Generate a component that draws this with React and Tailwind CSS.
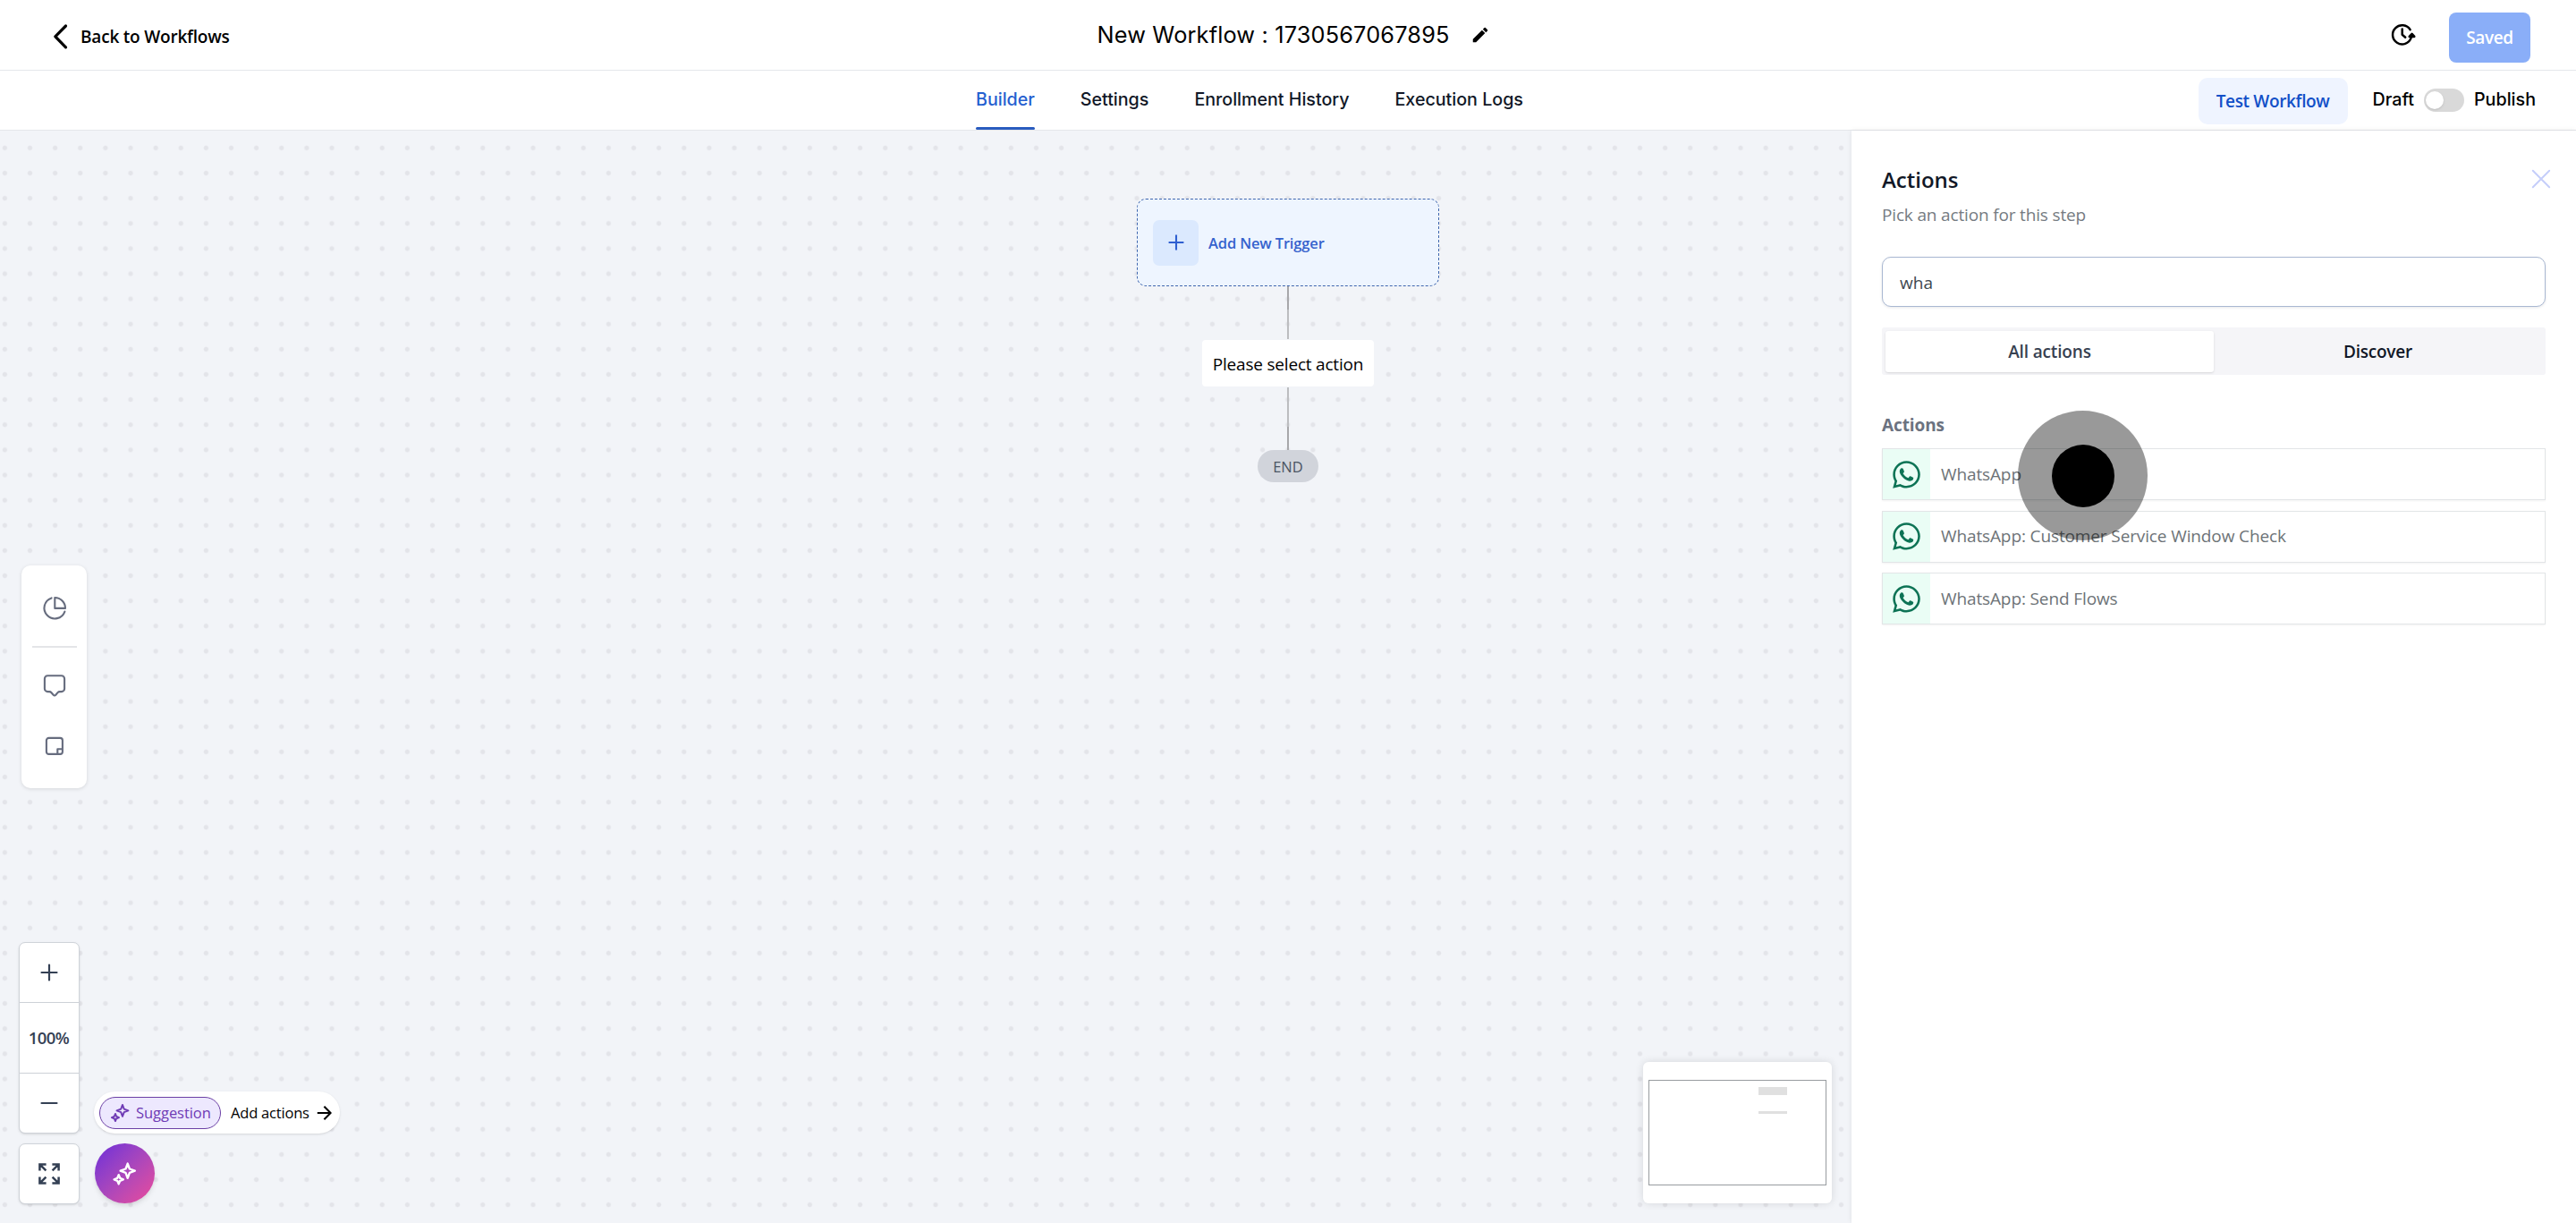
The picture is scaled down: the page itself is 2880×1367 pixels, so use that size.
import { useState } from "react";
import { MdEdit } from "react-icons/md";
import { FaWhatsapp } from "react-icons/fa";

const TABS = ["Builder", "Settings", "Enrollment History", "Execution Logs"];

const ACTIONS = [
  "WhatsApp",
  "WhatsApp: Customer Service Window Check",
  "WhatsApp: Send Flows",
];

function Sparkles({ className }) {
  return (
    <svg viewBox="0 0 30 30" fill="none" stroke="currentColor" strokeLinejoin="round" className={className}>
      <path strokeWidth="2.4" d="M18.7 3.6l2.2 5.9 5.9 2.2-5.9 2.2-2.2 5.9-2.2-5.9-5.9-2.2 5.9-2.2z" />
      <path strokeWidth="2.4" d="M8.7 16.2l1.5 3.6 3.6 1.5-3.6 1.5-1.5 3.6-1.5-3.6-3.6-1.5 3.6-1.5z" />
    </svg>
  );
}

function Header() {
  return (
    <header className="grid grid-cols-[1fr_auto_1fr] h-[79px] border-b border-[#e5e7eb] bg-white">
      <div className="flex items-center pl-[58px] pt-[3px]">
        <svg width="20" height="30" viewBox="0 0 20 30" fill="none" stroke="#000" strokeWidth="3.2" strokeLinecap="round" strokeLinejoin="round">
          <path d="M15.5 3L3.8 14.8l11.7 12" />
        </svg>
        <span className="ml-3 pt-[2px] text-[19px] tracking-[-0.2px] font-semibold text-black">Back to Workflows</span>
      </div>

      <div className="flex items-center pl-[12px] pb-px">
        <h1 className="w-[395px] font-['Inter'] text-[25.3px] font-normal tracking-[0.17px] text-black whitespace-nowrap">
          New Workflow : 1730567067895
        </h1>
        <MdEdit className="ml-[22px] size-[22px] text-black" />
      </div>

      <div className="flex justify-end pr-[51px] pt-[14px]">
        <svg className="mt-[11px] mr-[35px]" width="31" height="28" viewBox="0 0 31 28" fill="none" stroke="#000" strokeWidth="2.5" strokeLinecap="round" strokeLinejoin="round">
          <path d="M22.6 8.2A10.6 10.6 0 1 0 23.6 17.4" />
          <path d="M13.7 7.6v6.2l3.5 2.9" />
          <path d="M24.6 12.8l2.7 3.1h-5.6z" fill="#000" />
        </svg>
        <button className="h-[56px] w-[91px] rounded-[8px] bg-[#8aaef8] pt-px text-[19px] font-semibold tracking-[-0.4px] text-white">
          Saved
        </button>
      </div>
    </header>
  );
}

function TabBar({ active, onChange }) {
  return (
    <nav className="grid grid-cols-[1fr_auto_1fr] h-[67px] border-b border-[#e5e7eb] bg-white font-['Inter'] text-[19.7px] font-medium">
      <div />
      <div className="flex gap-[51px] pr-[86px]">
        {TABS.map((t) => (
          <button
            key={t}
            onClick={() => onChange(t)}
            className={
              t === active
                ? "relative pb-px text-[#2560d0] tracking-[-0.05px]"
                : "relative pb-px text-[#111827] tracking-[-0.02px]"
            }
          >
            {t}
            {t === active && <span className="absolute bottom-0 left-0 h-[3px] w-full rounded-sm bg-[#2a5cbf]" />}
          </button>
        ))}
      </div>
      <div className="flex justify-end pt-2 pr-[45px] text-black">
        <button className="h-[52px] w-[167px] rounded-[10px] bg-[#eff4ff] font-['Open_Sans'] text-[19px] font-semibold tracking-[-0.35px] text-[#1250c8]">
          Test Workflow
        </button>
        <div className="ml-7 flex h-[50px] items-center">
          <span>Draft</span>
          <span className="mx-[11px] flex h-[26px] w-[45px] items-center rounded-full bg-[#d9d9d9] pl-[2.5px]">
            <span className="size-5 rounded-full bg-white shadow" />
          </span>
          <span>Publish</span>
        </div>
      </div>
    </nav>
  );
}

function Flow() {
  return (
    <div className="absolute left-[1271px] top-[76px] flex w-[338px] flex-col items-center">
      <div className="flex h-[98px] w-full items-center rounded-[10px] border border-dashed border-[#3f66ae] bg-[#eef5ff] pl-[17px]">
        <span className="flex size-[51px] items-center justify-center rounded-[7px] bg-[#dbe9fe]">
          <svg width="18" height="18" viewBox="0 0 18 18" stroke="#2f5fd0" strokeWidth="2.1">
            <path d="M9 .6v16.8M.6 9h16.8" />
          </svg>
        </span>
        <span className="ml-[11px] pt-[2px] text-[16.5px] font-semibold tracking-[-0.15px] text-[#3562cd]">Add New Trigger</span>
      </div>
      <div className="h-[26px] w-[2px] bg-[#a7a7aa]" />
      <div className="h-[33px] w-[2px] bg-[#bcbdc0]" />
      <div className="mt-px flex h-[52px] w-[192px] items-center justify-center rounded-[4px] bg-white pt-[2px] text-[19px] tracking-[-0.2px] text-black">
        Please select action
      </div>
      <div className="mt-px h-[44px] w-[2px] bg-[#bcbdc0]" />
      <div className="h-[26px] w-[2px] bg-[#a7a7aa]" />
      <div className="flex h-[36px] w-[68px] items-center justify-center rounded-full bg-[#d1d4db] pt-[2px] text-[16.5px] text-[#4b5563]">
        END
      </div>
    </div>
  );
}

function Toolbar() {
  return (
    <div className="absolute left-[24px] top-[486px] flex h-[249px] w-[73px] flex-col items-center rounded-[10px] bg-white text-[#666c7e] shadow-[0_1px_4px_rgba(0,0,0,0.12)]">
      <svg className="mt-[34px]" width="28" height="28" viewBox="0 0 28 28" fill="none" stroke="currentColor" strokeWidth="2.1" strokeLinecap="round" strokeLinejoin="round">
        <path d="M14.3 2A11.8 11.8 0 0 1 26 13.9H14.3z" />
        <path d="M10.6 2.4A11.8 11.8 0 1 0 25.4 17.6" />
      </svg>
      <div className="mt-[28px] h-[2px] w-[50px] bg-[#e4e5e8]" />
      <svg className="mt-[28px]" width="28" height="28" viewBox="0 0 28 28" fill="none" stroke="currentColor" strokeWidth="2.1" strokeLinecap="round" strokeLinejoin="round">
        <path d="M6.3 3.3h15.4a3.4 3.4 0 0 1 3.4 3.4v11a3.4 3.4 0 0 1-3.4 3.4h-1.8q-1.5 0-2.4 1.1l-2.2 2.6q-1.3 1.3-2.6 0l-2.2-2.6q-.9-1.1-2.4-1.1H6.3a3.4 3.4 0 0 1-3.4-3.4v-11a3.4 3.4 0 0 1 3.4-3.4z" />
      </svg>
      <svg className="mt-[43px]" width="22" height="22" viewBox="0 0 22 22" fill="none" stroke="currentColor" strokeWidth="2.1" strokeLinejoin="round">
        <rect x="1.9" y="1.9" width="18" height="18" rx="2.6" />
        <path d="M19.9 14.2h-5.6v5.7" />
      </svg>
    </div>
  );
}

function ZoomControls() {
  return (
    <div className="absolute left-[21px] top-[907px] flex w-[68px] flex-col gap-[11px] text-[#344054]">
      <div className="flex h-[214px] flex-col divide-y divide-[#cdd1d7] rounded-[7px] border border-[#cfd3d9] bg-white shadow-sm">
        <button className="flex h-[67px] items-center justify-center">
          <svg width="20" height="20" viewBox="0 0 20 20" stroke="currentColor" strokeWidth="2.2" strokeLinecap="round">
            <path d="M10 1.5v17M1.5 10h17" />
          </svg>
        </button>
        <div className="flex h-[79px] items-center justify-center pr-px text-[18.5px] font-semibold tracking-[-0.6px]">100%</div>
        <button className="flex flex-1 items-center justify-center">
          <svg width="20" height="20" viewBox="0 0 20 20" stroke="currentColor" strokeWidth="2.2" strokeLinecap="round">
            <path d="M1.5 10h17" />
          </svg>
        </button>
      </div>
      <button className="flex h-[68px] items-center justify-center rounded-[7px] border border-[#cfd3d9] bg-white shadow-sm">
        <svg width="24" height="24" viewBox="0 0 24 24" fill="none" stroke="currentColor" strokeWidth="2.5">
          <path d="M1.4 8.6V1.4h7.2M1.4 1.4l7 7M15.4 1.4h7.2v7.2M22.6 1.4l-7 7M1.4 15.4v7.2h7.2M1.4 22.6l7-7M22.6 15.4v7.2h-7.2M22.6 22.6l-7-7" />
        </svg>
      </button>
    </div>
  );
}

function Assistant() {
  return (
    <div className="absolute left-[105px] top-[1074px] flex flex-col gap-[11px]">
      <div className="flex h-[47px] w-[275px] items-center rounded-full bg-white pl-[6px] shadow-sm">
        <span className="flex h-[36px] w-[136px] items-center rounded-full border border-[#6b3fa5] bg-[#ede8fe] pl-[10px] text-[#6f3bb5]">
          <Sparkles className="size-[24px]" />
          <span className="ml-[6px] pt-px text-[16.5px] tracking-[-0.05px]">Suggestion</span>
        </span>
        <span className="ml-[11px] pt-px text-[16.5px] tracking-[-0.2px] text-black">Add actions</span>
        <svg className="ml-[8px]" width="17" height="18" viewBox="0 0 17 18" fill="none" stroke="#000" strokeWidth="2.1">
          <path d="M.8 9h14.4M8.4 1.8L15.6 9l-7.2 7.2" />
        </svg>
      </div>
      <button className="ml-px flex size-[67px] items-center justify-center rounded-full bg-linear-to-br from-[#6d28d9] to-[#ec4899] pt-px pr-px text-white shadow-md">
        <Sparkles className="size-[30px]" />
      </button>
    </div>
  );
}

function MiniMap() {
  return (
    <div className="absolute left-[1837px] top-[1041px] h-[158px] w-[211px] rounded-[6px] bg-white px-[6px] pt-[20px] shadow-[0_0_10px_rgba(0,0,0,0.12)]">
      <div className="h-[118px] border border-[#989c9f] pl-[122px] pt-[7px]">
        <div className="h-[9px] w-[32px] bg-[#e0e0e0]" />
        <div className="mt-[18px] h-[3px] w-[32px] bg-[#e0e0e0]" />
      </div>
    </div>
  );
}

function ActionsPanel() {
  const [query, setQuery] = useState("wha");

  return (
    <aside className="relative w-[810px] bg-white px-[34px] pt-[35px] shadow-[0_0_6px_rgba(0,0,0,0.08)]">
      <div className="flex justify-between">
        <h2 className="text-[24px] leading-[40px] font-semibold text-[#111827]">Actions</h2>
        <svg className="mt-[8px] -mr-[6px]" width="22" height="22" viewBox="0 0 22 22" stroke="#c5cefa" strokeWidth="2" strokeLinecap="round">
          <path d="M1.8 1.8l18.4 18.4M20.2 1.8L1.8 20.2" />
        </svg>
      </div>
      <p className="text-[19px] leading-[38px] tracking-[-0.16px] text-[#757b82]">Pick an action for this step</p>

      <input
        value={query}
        onChange={(e) => setQuery(e.target.value)}
        className="mt-[28px] block h-[56px] w-[742px] rounded-[10px] border border-[#a9b8d2] bg-white px-[19px] pt-[2px] text-[19px] text-[#40474f] shadow-[0_1px_3px_rgba(16,24,40,0.1)] outline-none"
      />

      <div className="mt-[23px] flex h-[53px] w-[742px] rounded-[3px] bg-[#f5f5f8] p-[4px] pb-[3px] text-[19px] font-semibold">
        <button className="w-[367px] rounded-[3px] bg-white tracking-[-0.15px] text-[#374151] shadow">All actions</button>
        <button className="flex-1 tracking-[-0.25px] text-[#111827]">Discover</button>
      </div>

      <h3 className="mt-[42px] text-[19px] leading-[28px] font-bold tracking-[-0.1px] text-[#6b7280]">Actions</h3>
      <ul className="mt-[12px] flex flex-col gap-[11.6px]">
        {ACTIONS.map((name) => (
          <li key={name} className="flex h-[58px] w-[742px] items-center border border-[#e2e5e7] bg-white shadow-xs">
            <span className="flex h-full w-[53px] items-center justify-center bg-[#eafdf5]">
              <FaWhatsapp className="size-[35px] text-[#0d7355]" />
            </span>
            <span className="ml-[12px] text-[19px] tracking-[-0.12px] text-[#6d7377]">{name}</span>
          </li>
        ))}
      </ul>

      {/* tap indicator */}
      <div className="absolute left-[186px] top-[313px] flex size-[145px] items-center justify-center rounded-full bg-black/40">
        <div className="size-[70px] rounded-full bg-black" />
      </div>
    </aside>
  );
}

export default function App() {
  const [tab, setTab] = useState("Builder");

  return (
    <div className="flex h-[1367px] w-[2880px] flex-col overflow-hidden bg-white font-['Open_Sans',sans-serif]">
      <Header />
      <TabBar active={tab} onChange={setTab} />
      <div className="flex min-h-0 flex-1">
        <main className="relative w-[2070px] bg-[#f2f4f8] bg-[radial-gradient(circle_at_center,#e3e4e9_2px,transparent_3.2px)] bg-[length:28.125px_28.125px] bg-[position:-8.7px_5.3px]">
          <Flow />
          <Toolbar />
          <ZoomControls />
          <Assistant />
          <MiniMap />
        </main>
        <ActionsPanel />
      </div>
    </div>
  );
}
